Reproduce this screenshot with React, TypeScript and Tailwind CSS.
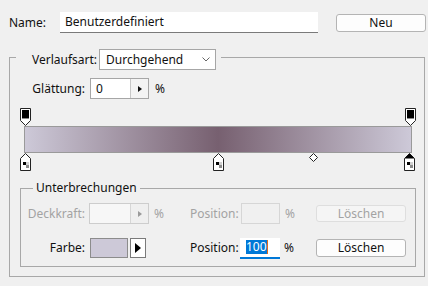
import React from "react"

const font = { fontFamily: '"Noto Sans", "Open Sans", sans-serif' }

function Arrow({ disabled }: { disabled?: boolean }) {
  return (
    <svg width="4" height="6" viewBox="0 0 4 6">
      <path d="M0 0 L4 3 L0 6 Z" fill={disabled ? "#9a9a9a" : "#111"} />
    </svg>
  )
}

function TopStop({ left }: { left: number }) {
  return (
    <svg className="absolute top-0" style={{ left }} width="11" height="18" viewBox="0 0 11 18">
      <path d="M0.5 0.5 H10.5 V12.5 L5.5 17.5 L0.5 12.5 Z" fill="#fff" stroke="#222" />
      <rect x="2" y="2" width="7" height="8" fill="#000" />
      <rect x="2" y="10" width="7" height="1" fill="#8a8a8a" />
    </svg>
  )
}

function BottomStop({ left, selected }: { left: number; selected?: boolean }) {
  return (
    <svg className="absolute top-0" style={{ left }} width="11" height="18" viewBox="0 0 11 18">
      <path d="M5.5 0.5 L10.5 5.5 V17.5 H0.5 V5.5 Z" fill="#fff" stroke="#222" />
      {selected && <path d="M5.5 0.5 L10.5 5.5 H0.5 Z" fill="#000" />}
      <rect x="2.5" y="8.5" width="6" height="6" fill="#fff" stroke="#222" strokeWidth="0" />
      <rect x="3" y="9" width="3" height="3" fill="#000" />
      <rect x="6" y="12" width="3" height="3" fill="#8a8a8a" />
      <rect x="6" y="9" width="3" height="3" fill="#d0d0d0" />
    </svg>
  )
}

export default function App() {
  return (
    <div className="w-[428px] h-[286px] overflow-hidden bg-[#f0f0f0] text-[12px] text-[#111] pt-[12px]" style={font}>
      {/* name row */}
      <div className="flex items-center pl-[9px] h-[21px]">
        <span className="w-[51px] leading-none">Name:</span>
        <div className="w-[258px] h-[21px] bg-white border-b border-[#7a7a7a] flex items-center pl-[5px] leading-none">
          Benutzerdefiniert
        </div>
        <button className="ml-[18px] w-[90px] h-[18px] rounded-[3px] border border-[#b4b4b4] bg-[#fdfdfd] leading-none flex items-center justify-center">
          Neu
        </button>
      </div>

      <fieldset className="mt-[12px] ml-[9px] w-[416px] border border-[#a8a8a8] pb-[9px]">
        <legend className="ml-[6px] pl-[16px] pr-[5px] pt-[4px]">
          <div className="flex items-center h-[21px]">
            <span className="w-[67px] leading-none">Verlaufsart:</span>
            <div className="w-[117px] h-[21px] bg-white border border-[#a6a6a6] flex items-center justify-between pl-[6px] pr-[5px] leading-none">
              <span>Durchgehend</span>
              <svg width="8" height="5" viewBox="0 0 8 5">
                <path d="M0.5 0.5 L4 4 L7.5 0.5" fill="none" stroke="#666" />
              </svg>
            </div>
          </div>
        </legend>

        <div className="mt-[8px] flex items-center h-[21px]">
          <span className="w-[75px] text-right leading-none">Glättung:</span>
          <div className="ml-[5px] w-[59px] h-[21px] flex border border-[#a6a6a6]">
            <div className="w-[39px] bg-white flex items-center pl-[5px] leading-none">0</div>
            <div className="flex-1 border-l border-[#c8c8c8] bg-[#f4f4f4] flex items-center justify-center">
              <Arrow />
            </div>
          </div>
          <span className="ml-[6px] leading-none">%</span>
        </div>

        {/* gradient */}
        <div className="mt-[9px] ml-[10px] w-[396px]">
          <div className="relative h-[18px]">
            <TopStop left={0} />
            <TopStop left={385} />
          </div>
          <div className="ml-[4px] w-[388px] h-[27px] border border-[#9a9a9a] bg-[linear-gradient(to_right,#cdc9d8,#776070_50%,#cdc9d8)]" />
          <div className="relative h-[18px]">
            <BottomStop left={0} />
            <BottomStop left={193} />
            <svg className="absolute top-0" style={{ left: 289 }} width="9" height="9" viewBox="0 0 9 9">
              <path d="M4.5 0.5 L8.5 4.5 L4.5 8.5 L0.5 4.5 Z" fill="#fff" stroke="#222" />
            </svg>
            <BottomStop left={384} selected />
          </div>
        </div>

        <fieldset className="mt-[9px] ml-[10px] w-[396px] border border-[#a8a8a8] pb-[8px]">
          <legend className="ml-[12px] px-[3px] h-[16px] leading-[16px]">Unterbrechungen</legend>

          <div className="mt-[7px] flex items-center h-[21px] text-[#a3a3a3]">
            <div className="w-[169px] flex items-center">
              <span className="w-[64px] text-right leading-none">Deckkraft:</span>
              <div className="ml-[4px] w-[60px] h-[21px] flex border border-[#cdcdcd]">
                <div className="w-[40px] bg-[#f7f7f7]" />
                <div className="flex-1 border-l border-[#d6d6d6] bg-[#efefef] flex items-center justify-center">
                  <Arrow disabled />
                </div>
              </div>
              <span className="ml-[5px] leading-none">%</span>
            </div>
            <div className="w-[126px] flex items-center">
              <span className="w-[51px] leading-none">Position:</span>
              <div className="w-[39px] h-[21px] border border-[#d6d6d6] bg-[#f0f0f0]" />
              <span className="ml-[5px] leading-none">%</span>
            </div>
            <button className="w-[90px] h-[17px] rounded-[3px] border border-[#dedede] bg-[#f5f5f5] leading-none flex items-center justify-center">
              Löschen
            </button>
          </div>

          <div className="mt-[14px] flex items-center h-[20px]">
            <div className="w-[169px] flex items-center">
              <span className="w-[64px] text-right leading-none">Farbe:</span>
              <div className="ml-[5px] w-[38px] h-[20px] border border-[#8c8c8c] bg-[#cdc9d8]" />
              <div className="ml-[2px] w-[16px] h-[20px] border border-[#7a7a7a] bg-white flex items-center justify-center">
                <svg width="6" height="10" viewBox="0 0 6 10">
                  <path d="M0 0 L6 5 L0 10 Z" fill="#000" />
                </svg>
              </div>
            </div>
            <div className="w-[126px] flex items-center">
              <span className="w-[50px] leading-none">Position:</span>
              <div className="w-[40px] h-[21px] bg-white border-b-2 border-[#0078d7] flex items-center pl-[6px]">
                <span className="bg-[#0078d7] text-white leading-[14px]">100</span>
                <span className="w-px h-[14px] bg-[#e06a1a]" />
              </div>
              <span className="ml-[4px] leading-none">%</span>
            </div>
            <button className="w-[90px] h-[18px] rounded-[3px] border border-[#b4b4b4] bg-[#fdfdfd] leading-none flex items-center justify-center">
              Löschen
            </button>
          </div>
        </fieldset>
      </fieldset>
    </div>
  )
}
